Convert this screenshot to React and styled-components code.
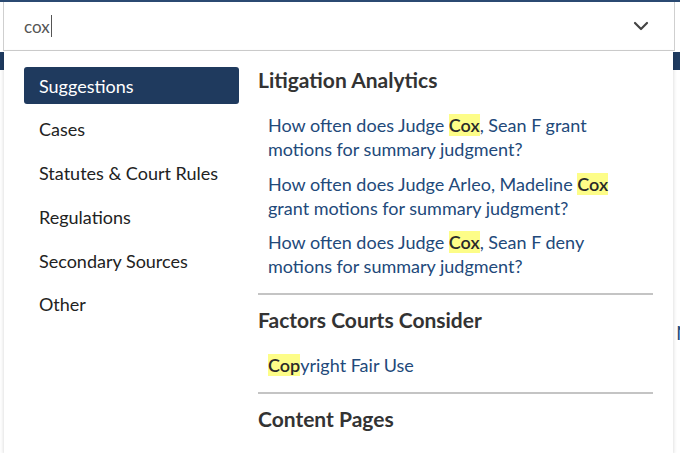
import styled, { createGlobalStyle } from "styled-components"

const GlobalStyle = createGlobalStyle`
  body {
    margin: 0;
    background: #fff;
    font-family: "Lato", "Liberation Sans", sans-serif;
  }
`

const categories = [
    "Suggestions",
    "Cases",
    "Statutes & Court Rules",
    "Regulations",
    "Secondary Sources",
    "Other",
]

const analytics = [
    ["How often does Judge ", "Cox", ", Sean F grant motions for summary judgment?"],
    ["How often does Judge Arleo, Madeline ", "Cox", " grant motions for summary judgment?"],
    ["How often does Judge ", "Cox", ", Sean F deny motions for summary judgment?"],
]

function ChevronDown() {
    return (
        <svg width="16" height="10" viewBox="0 0 16 10" fill="none">
            <path d="M2 2l6 6 6-6" stroke="#444" strokeWidth="2.2" strokeLinecap="round" strokeLinejoin="round" />
        </svg>
    )
}

export default function App() {
    return (
        <>
            <GlobalStyle />
            <Page>
                <Backdrop>
                    <NavyBand />
                    <BackText>Notes</BackText>
                </Backdrop>
                <Dropdown>
                    <SearchBox>
                        <Query>cox<Caret /></Query>
                        <ChevronDown />
                    </SearchBox>
                    <Panel>
                        <Categories>
                            {categories.map((c, i) => (
                                <Category key={c} active={i === 0}>{c}</Category>
                            ))}
                        </Categories>
                        <Results>
                            <Section>
                                <Heading>Litigation Analytics</Heading>
                                <LinkList>
                                    {analytics.map(([a, hit, b]) => (
                                        <ResultLink key={a + b}>{a}<Hit>{hit}</Hit>{b}</ResultLink>
                                    ))}
                                </LinkList>
                            </Section>
                            <Section divided>
                                <Heading>Factors Courts Consider</Heading>
                                <LinkList>
                                    <ResultLink><Hit>Cop</Hit>yright Fair Use</ResultLink>
                                </LinkList>
                            </Section>
                            <Section divided>
                                <Heading>Content Pages</Heading>
                            </Section>
                        </Results>
                    </Panel>
                </Dropdown>
            </Page>
        </>
    )
}

const Page = styled.div`
    position: relative;
    height: 453px;
    overflow: hidden;
    border-top: 2px solid #2b4a72;
    box-sizing: border-box;
`

const Backdrop = styled.div`
    padding-top: 50px;
`

const NavyBand = styled.div`
    height: 18px;
    background: #1f3b60;
`

const BackText = styled.div`
    margin: 250px 0 0 676px;
    color: #244c7c;
    font-size: 20px;
`

const Dropdown = styled.div`
    position: absolute;
    top: 0;
    left: 3px;
    width: 672px;
`

const SearchBox = styled.div`
    display: flex;
    align-items: center;
    justify-content: space-between;
    height: 48px;
    padding: 0 25px 0 20px;
    background: #fff;
    border: 1px solid #cfcfcf;
    border-top: none;
`

const Query = styled.div`
    display: flex;
    align-items: center;
    font-size: 17px;
    color: #555;
`

const Caret = styled.span`
    display: inline-block;
    width: 1px;
    height: 22px;
    margin-left: 1px;
    background: #555;
`

const Panel = styled.div`
    display: flex;
    gap: 19px;
    margin: 0 2px 0 1px;
    padding: 16px 20px 0 20px;
    height: 402px;
    box-sizing: border-box;
    background: #fff;
    box-shadow: 0 2px 4px rgba(0, 0, 0, 0.18);
`

const Categories = styled.div`
    display: flex;
    flex-direction: column;
    gap: 6.8px;
    width: 215px;
    flex-shrink: 0;
`

const Category = styled.div`
    height: 37px;
    display: flex;
    align-items: center;
    padding-left: 15px;
    border-radius: 3px;
    font-size: 18px;
    color: ${p => (p.active ? "#fff" : "#222")};
    background: ${p => (p.active ? "#1f3a5e" : "transparent")};
`

const Results = styled.div`
    flex: 1;
    margin-top: -1px;
`

const Section = styled.div`
    padding: ${p => (p.divided ? "11px 0 15px" : "0 0 15px")};
    border-top: ${p => (p.divided ? "2px solid #c4c4c4" : "none")};
`

const Heading = styled.h3`
    margin: 0;
    font-size: 21px;
    font-weight: 700;
    color: #333;
    line-height: 28px;
`

const LinkList = styled.div`
    display: flex;
    flex-direction: column;
    gap: 10.5px;
    width: 350px;
    padding: 19px 0 0 10px;
`

const ResultLink = styled.a`
    font-size: 18px;
    line-height: 24px;
    color: #22497a;
    cursor: pointer;
`

const Hit = styled.span`
    background: #fdfd88;
    color: #2a2a2a;
    font-weight: 600;
`
